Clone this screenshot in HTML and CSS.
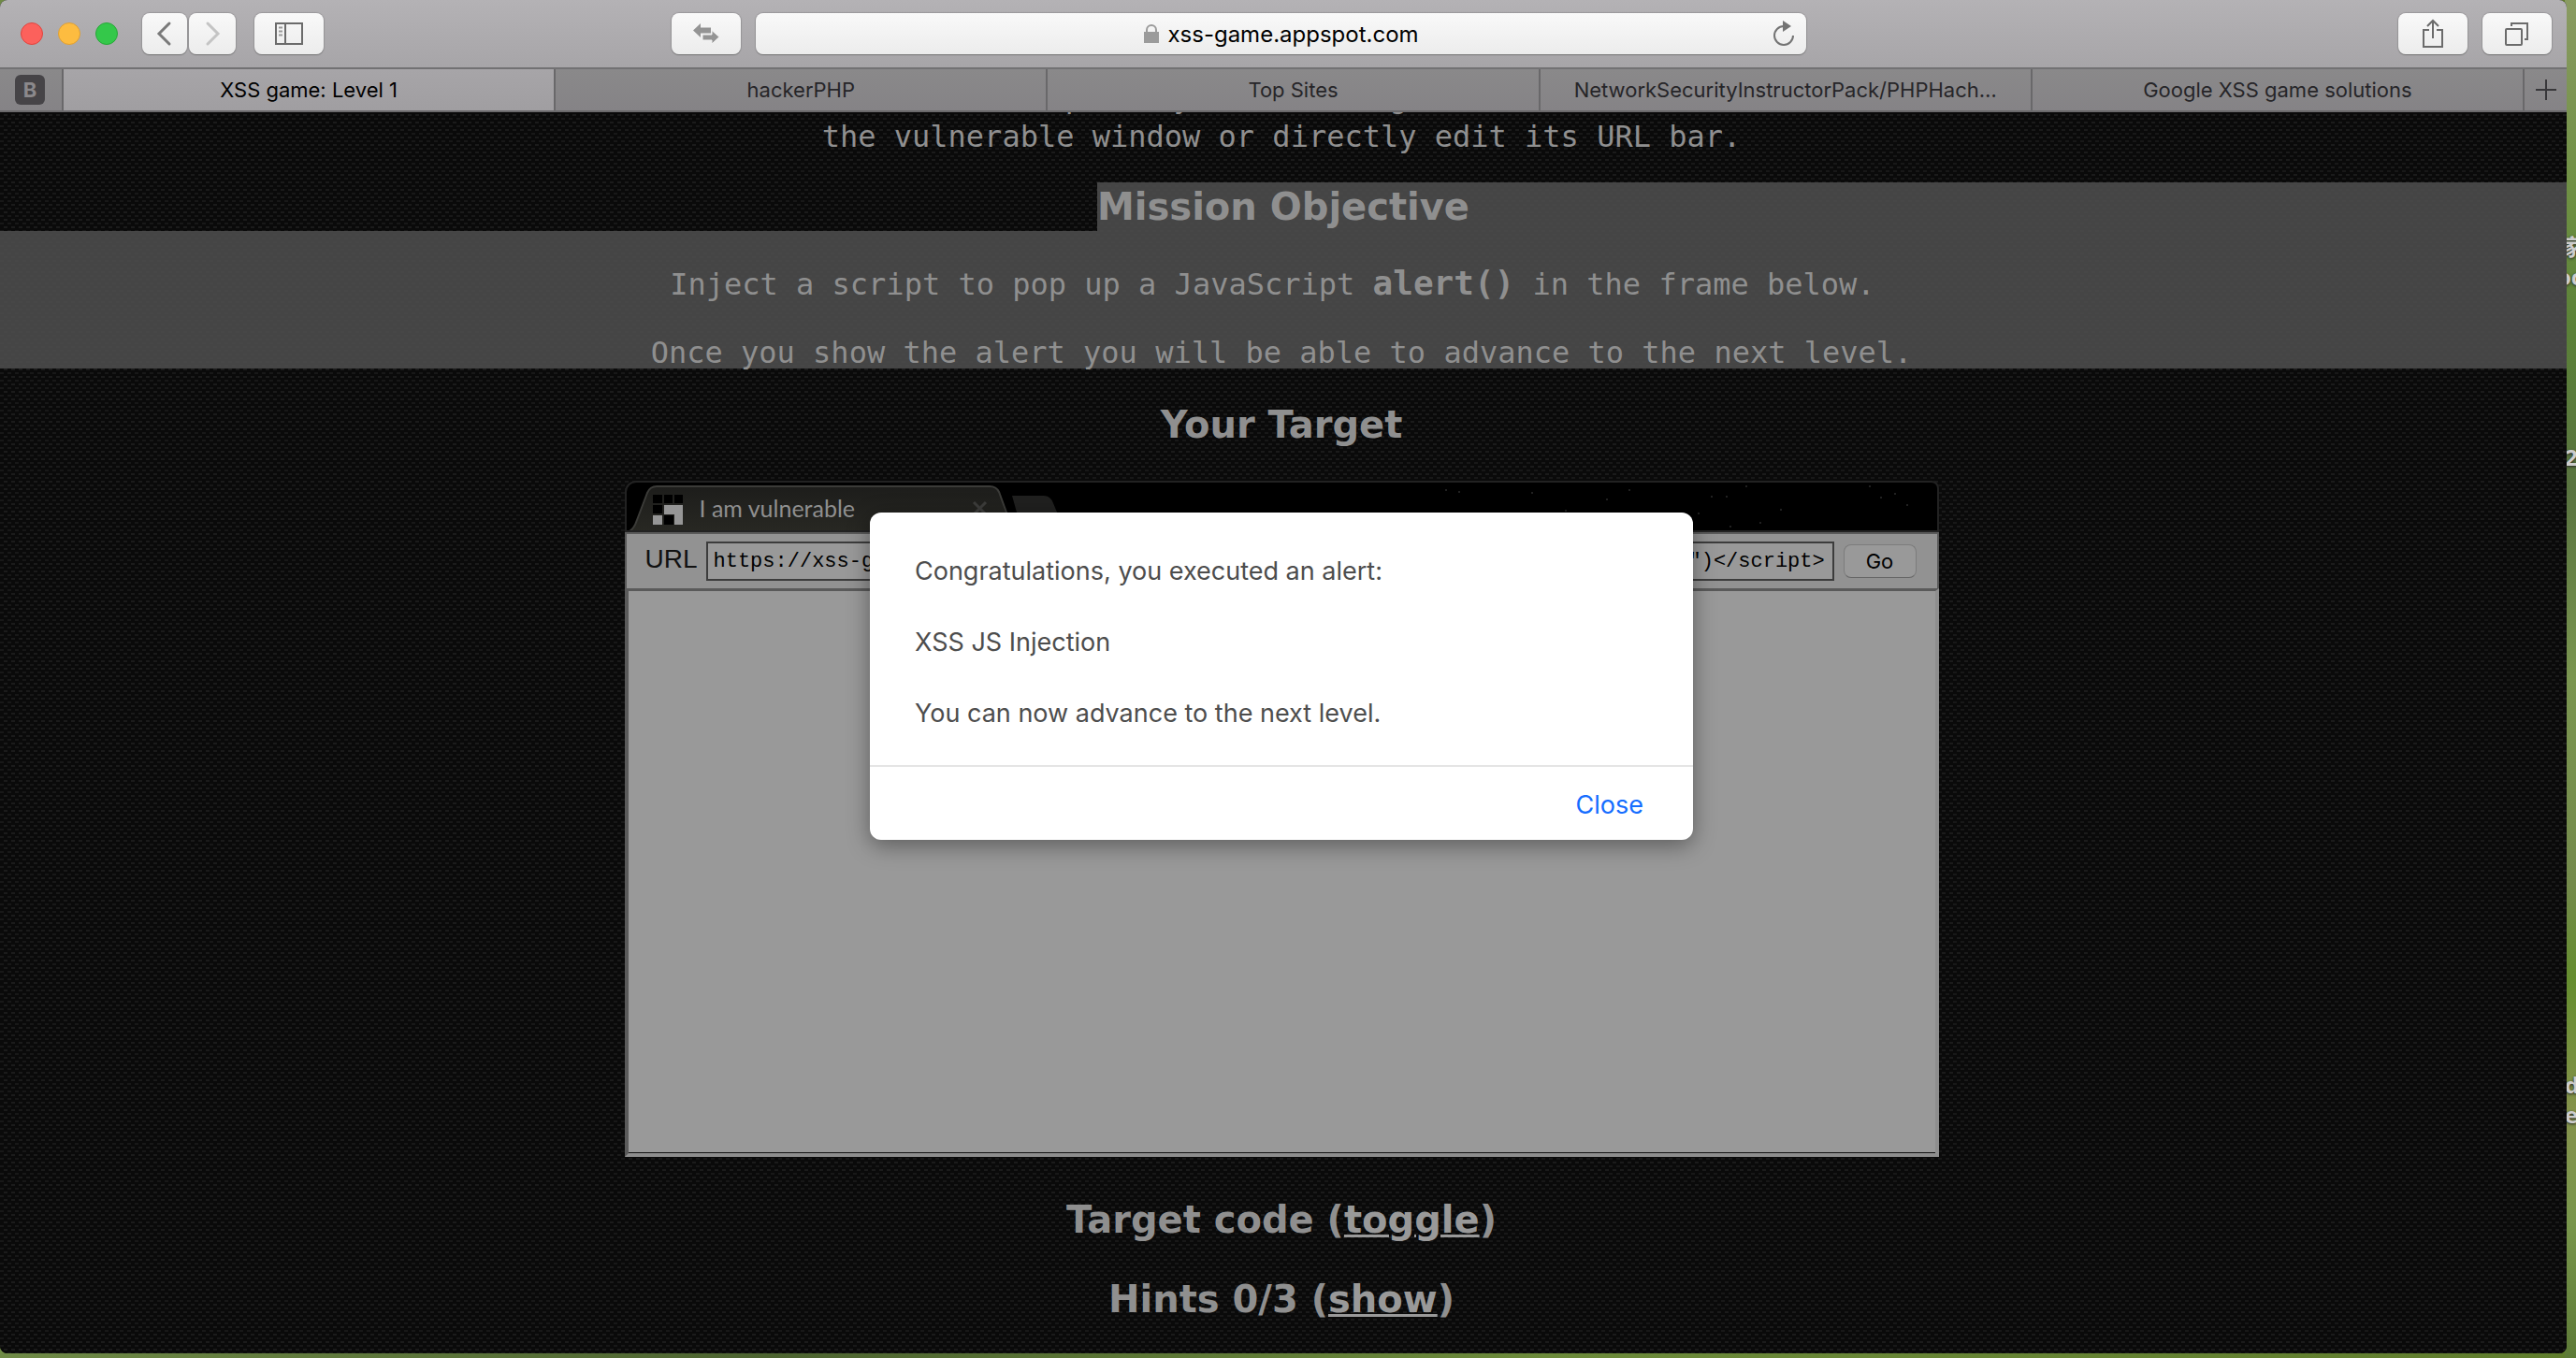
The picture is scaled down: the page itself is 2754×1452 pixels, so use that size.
FILE: index.html
```html
<!DOCTYPE html>
<html lang="en">
<head>
<meta charset="utf-8">
<title>XSS game: Level 1</title>
<link rel="stylesheet" href="styles.css">
</head>
<body>
<div class="desktop" aria-hidden="true">
  <span class="label label-a">家</span>
  <span class="label label-b">oc</span>
  <span class="label label-c">22</span>
  <span class="label label-d">d</span>
  <span class="label label-e">e</span>
</div>
<div class="window">
  <header class="toolbar">
    <div class="lights">
      <button class="light red" aria-label="Close window"></button>
      <button class="light yellow" aria-label="Minimise"></button>
      <button class="light green" aria-label="Zoom"></button>
    </div>
    <div class="nav">
      <button class="tool back" aria-label="Back"><svg width="20" height="30" viewBox="0 0 20 30"><path d="M15 4 4 15l11 11" fill="none" stroke="#7a7a7a" stroke-width="3" stroke-linecap="round"/></svg></button>
      <button class="tool forward" aria-label="Forward"><svg width="20" height="30" viewBox="0 0 20 30"><path d="M5 4l11 11L5 26" fill="none" stroke="#c4c4c4" stroke-width="3" stroke-linecap="round"/></svg></button>
    </div>
    <button class="tool" aria-label="Sidebar"><svg width="30" height="24" viewBox="0 0 30 24" fill="none" stroke="#6b6b6b" stroke-width="2"><rect x="1" y="1" width="28" height="22"/><path d="M11 1v22"/><path d="M4 5.500h4M4 9.500h4M4 13.500h4" stroke="#999"/></svg></button>
    <div class="address-group">
      <button class="tool" aria-label="Switch"><svg width="28" height="24" viewBox="0 0 28 24" fill="#949494"><path d="M0 8.500 8 1v4.500h11v6H8V16z"/><path d="M28 15.500 20 8.500V13H10v6h10v4z" stroke="#f2f2f2" stroke-width="1"/></svg></button>
      <div class="address">
        <svg class="lock" width="18" height="22" viewBox="0 0 18 22"><path d="M4 10V7a5 5 0 0 1 10 0v3" fill="none" stroke="#9b9b9b" stroke-width="2"/><rect x="1" y="9" width="16" height="12" fill="#9b9b9b"/></svg>
        <span>xss-game.appspot.com</span>
        <button class="reload" aria-label="Reload"><svg width="24" height="28" viewBox="0 0 24 28"><path d="M12 6a10 10 0 1 0 10 10" fill="none" stroke="#747474" stroke-width="2"/><path d="M11 0l9 6-9 6z" fill="#747474"/></svg></button>
      </div>
    </div>
    <div class="right-tools">
      <button class="tool" aria-label="Share"><svg width="24" height="32" viewBox="0 0 24 32" fill="none" stroke="#6b6b6b" stroke-width="2"><path d="M8 12H2v18h20V12h-6M12 21V3M6 8l6-6 6 6"/></svg></button>
      <button class="tool" aria-label="All tabs"><svg width="26" height="26" viewBox="0 0 26 26" fill="none" stroke="#6b6b6b" stroke-width="2"><rect x="1" y="8" width="17" height="17" rx="1"/><path d="M7 5V2h17v17h-3"/></svg></button>
    </div>
  </header>
  <nav class="tabs">
    <a class="pin" href="#"><b>B</b></a>
    <a class="tab active" href="#">XSS game: Level 1</a>
    <a class="tab" href="#">hackerPHP</a>
    <a class="tab" href="#">Top Sites</a>
    <a class="tab" href="#">NetworkSecurityInstructorPack/PHPHach…</a>
    <a class="tab" href="#">Google XSS game solutions</a>
    <button class="new-tab" aria-label="New tab"><svg width="22" height="22" viewBox="0 0 22 22"><path d="M11 0v22M0 11h22" stroke="#38373a" stroke-width="2"/></svg></button>
  </nav>
  <main class="page">
    <p class="intro">make it execute JavaScript of your choosing. You can take actions inside<br>the vulnerable window or directly edit its URL bar.</p>
    <h2 class="mission"><span>Mission Objective</span></h2>
    <div class="selected">
      <p>Inject a script to pop up a JavaScript <b>alert()</b> in the frame below.&nbsp;</p>
      <p>Once you show the alert you will be able to advance to the next level.</p>
    </div>
    <h2 class="target-title">Your Target</h2>
    <section class="frame">
      <div class="frame-tabs">
        <svg class="frame-tab" width="480" height="55" viewBox="0 0 480 55">
          <defs><linearGradient id="tabfill" x1="0" y1="0" x2="0" y2="1"><stop offset="0" stop-color="#1d1d1b"/><stop offset="1" stop-color="#282823"/></linearGradient></defs>
          <path d="M0 54Q7 53 11 40L22 11Q25 4 32 4H388Q395 4 398 10L414 54z" fill="url(#tabfill)"/>
          <path d="M0 53Q7 52 11 40L22 11Q25 4 32 4H388Q395 4 398 10L414 54" fill="none" stroke="#3b3b38" stroke-width="2"/>
          <path d="M412 14h34q7 0 10 8l10 24h-38q-6 0-9-7z" fill="#20201f"/>
          <path d="M371 21l13 13M384 21l-13 13" stroke="#3d3d3b" stroke-width="3"/>
          <path d="M28 13h10v9H28zM40 13h9v9h-9zM51 13h9v9h-9zM28 24h10v9H28zM40 35h10v10H40z" fill="#000"/>
          <path d="M40 24h20v21h-9V34H40zM28 35h10v10H28z" fill="#969696"/>
        </svg>
        <span class="frame-name">I am vulnerable</span>
        <svg class="stars" width="800" height="50" viewBox="0 0 800 50" fill="#2c2c2c"><circle cx="275" cy="8" r="1"/><circle cx="289" cy="10" r="1"/><circle cx="367" cy="11" r="1"/><circle cx="403" cy="30" r="1"/><circle cx="447" cy="18" r="1"/><circle cx="471" cy="8" r="1"/><circle cx="559" cy="15" r="1"/><circle cx="575" cy="15" r="1"/><circle cx="545" cy="33" r="1"/><circle cx="633" cy="29" r="1"/><circle cx="611" cy="43" r="1"/><circle cx="579" cy="47" r="1"/><circle cx="596" cy="4" r="1"/><circle cx="728" cy="4" r="1"/><circle cx="740" cy="16" r="1"/><circle cx="755" cy="12" r="1"/><circle cx="768" cy="24" r="1"/></svg>
      </div>
      <form class="url-bar">
        <label for="url">URL</label>
        <input id="url" type="text" value='https://xss-game.appspot.com/level1/frame?query=&lt;script&gt;alert("XSS JS Injection")&lt;/script&gt;'>
        <button type="button">Go</button>
      </form>
      <div class="view"></div>
    </section>
    <h2 class="code-title">Target code (<a href="#">toggle</a>)</h2>
    <h2 class="hints-title">Hints 0/3 (<a href="#">show</a>)</h2>
  </main>
</div>
<div class="dialog" role="alertdialog" aria-label="Alert">
  <div class="message">
    <p>Congratulations, you executed an alert:</p>
    <p>XSS JS Injection</p>
    <p>You can now advance to the next level.</p>
  </div>
  <div class="actions"><button>Close</button></div>
</div>
</body>
</html>
```

FILE: styles.css
```css
* { box-sizing: border-box; }
body {
  margin: 0;
  height: 100vh;
  position: relative;
  overflow: hidden;
  padding: 0 10px 5px 0;
  font-family: Inter, sans-serif;
  background: linear-gradient(90deg, #6f8a46, #4c6330 30%, #6c8a3a 60%, #5f7c2c);
}
h2, p { margin: 0; }
button { font: inherit; border: 0; padding: 0; }
svg { display: block; }
.desktop {
  position: absolute;
  inset: 0 0 0 auto;
  width: 12px;
  overflow: hidden;
  background: linear-gradient(#8a9b62, #6d8f42 15%, #5b8138 24%, #597340 36%, #7a9550 50%, #748a4c 65%, #658d2f 72%, #85924c 82%, #79964c 90%, #5d7a37);
}
.label {
  position: absolute;
  left: 0;
  font: 700 24px/28px "Open Sans", "Noto Sans CJK SC", sans-serif;
  color: #ccc;
  text-shadow: 0 1px 3px #222;
}
.label-a { top: 250px; left: -4px; }
.label-b { top: 282px; left: -8px; }
.label-c { top: 475px; }
.label-d { top: 1146px; }
.label-e { top: 1178px; }
.window {
  position: relative;
  display: flex;
  flex-direction: column;
  height: 100%;
  border-radius: 8px;
  overflow: hidden;
  background: #0a0a0a;
}
.toolbar {
  display: flex;
  align-items: center;
  padding: 0 16px 0 22px;
  height: 74px;
  flex: none;
  border-bottom: 2px solid #727173;
  background: linear-gradient(#b4b2b5, #a7a5a8);
}
.lights { display: flex; gap: 16px; margin-right: 26px; }
.light { width: 24px; height: 24px; border-radius: 50%; border: 1px solid; }
.red { background: #fc615c; border-color: #e0443e; }
.yellow { background: #fdbc40; border-color: #de9f34; }
.green { background: #34c84a; border-color: #27a837; }
.nav { display: flex; gap: 2px; margin-right: 20px; }
.tool {
  display: flex;
  align-items: center;
  justify-content: center;
  width: 74px;
  height: 44px;
  border-radius: 8px;
  background: linear-gradient(#f9f9f9, #ececec);
  box-shadow: 0 1px 1px #777, 0 0 1px 1px #9a989b;
}
.nav .back { width: 48px; }
.nav .forward { width: 50px; }
.address-group { flex: 1; display: flex; gap: 16px; margin: 0 633px 0 372px; }
.address {
  flex: 1;
  position: relative;
  display: flex;
  align-items: center;
  justify-content: center;
  gap: 8px;
  height: 44px;
  border-radius: 8px;
  font-size: 24px;
  color: #000;
  background: linear-gradient(#f9f9f9, #ececec);
  box-shadow: 0 1px 1px #777, 0 0 1px 1px #9a989b;
}
.reload { position: absolute; right: 12px; top: 8px; background: none; }
.right-tools { display: flex; gap: 16px; }
.tabs {
  display: flex;
  flex: none;
  height: 46px;
  border-bottom: 2px solid #6b6a6c;
  background: linear-gradient(#8a898a, #858386);
}
.pin {
  width: 66px;
  display: flex;
  align-items: center;
  justify-content: center;
  padding-right: 2px;
  text-decoration: none;
}
.pin b {
  width: 32px;
  height: 32px;
  border-radius: 6px;
  background: #464447;
  color: #8b898c;
  font-size: 22px;
  line-height: 32px;
  text-align: center;
}
.tab {
  flex: 1;
  text-align: center;
  font-size: 22px;
  line-height: 44px;
  color: #262528;
  text-decoration: none;
  white-space: nowrap;
  border-left: 2px solid #69686a;
}
.active { color: #000; background: linear-gradient(#a7a5a8, #a09ea1); }
.new-tab {
  width: 47px;
  display: flex;
  align-items: center;
  justify-content: center;
  border-left: 2px solid #69686a;
  background: none;
}
.page {
  flex: 1;
  overflow: hidden;
  text-align: center;
  color: #8f8f8f;
  font: 32px/42px "DejaVu Sans Mono", monospace;
  background-color: #0a0a0a;
  background-image:
    conic-gradient(from 0deg at 4px 2px, transparent 75%, #1b1b1b 0),
    conic-gradient(from 0deg at 4px 2px, transparent 75%, #181818 0);
  background-size: 8px 8px;
  background-position: 4px 2px, 0 6px;
}
.intro { margin-top: -37px; padding-right: 4px; }
.page h2 { font: 700 40px/52px "DejaVu Sans", sans-serif; padding-right: 4px; }
.page .mission {
  display: grid;
  grid-template-columns: 1fr auto 1fr;
  margin-top: 28px;
  padding: 0;
}
.mission::before, .mission::after { content: ""; }
.mission span, .mission::after, .selected { background: rgba(79, 79, 79, .86); }
.selected { padding: 35px 4px 0 0; height: 147px; }
.selected p { height: 74px; }
.selected b { font-size: 36px; line-height: 42px; }
.page .target-title { margin-top: 34px; }
.frame { width: 1405px; max-width: 100%; margin: 34px auto 0; position: relative; right: 2px; }
.frame-tabs {
  position: relative;
  height: 55px;
  border: 2px solid #222;
  border-radius: 12px 8px 0 0;
  background: #000;
  overflow: hidden;
}
.frame-tab, .stars { position: absolute; top: 0; left: 0; }
.stars { left: auto; right: 0; }
.frame-name { position: absolute; left: 78px; top: 9px; font: 25px/36px Lato, sans-serif; }
.url-bar {
  display: flex;
  align-items: center;
  height: 60px;
  padding: 0 22px 0 20px;
  border: 2px solid #5a5a5a;
  border-bottom: 0;
  background: #929292;
}
.url-bar label { font: 28px/32px "Liberation Sans", sans-serif; color: #111; margin-right: 9px; padding-bottom: 4px; }
.url-bar input {
  flex: 1;
  min-width: 0;
  height: 42px;
  border: 2px solid #3c3c3c;
  border-radius: 0;
  padding: 0 6px;
  background: #999;
  color: #000;
  font: 22px/30px "Liberation Mono", monospace;
}
.url-bar button {
  width: 78px;
  height: 36px;
  margin-left: 10px;
  border-radius: 8px;
  border: 1px solid #7c7c7c;
  border-bottom-color: #666;
  background: #999;
  color: #000;
  font: 22px/30px Inter, sans-serif;
}
.view {
  height: 608px;
  background: linear-gradient(#111, #111) 0 600px / 100% 1px no-repeat #999;
  border: 4px solid #8e8e8e;
  border-top: 3px solid #5a5a5a;
  border-left-color: #5a5a5a;
}
.page .code-title { margin-top: 41px; }
.page .hints-title { margin-top: 33px; }
.page h2 a { color: #999; text-decoration-thickness: 3px; }
.dialog {
  position: absolute;
  left: 50%;
  top: 548px;
  width: 880px;
  margin-left: -447px;
  border-radius: 12px;
  background: #fff;
  box-shadow: 0 6px 24px rgba(0, 0, 0, .4);
}
.message {
  padding: 43px 48px 35px;
  color: #4d4d4d;
  font-size: 27px;
  line-height: 40px;
  border-bottom: 2px solid #e5e5e5;
}
.message p { margin-bottom: 36px; }
.message p:last-child { margin-bottom: 0; }
.actions { display: flex; justify-content: flex-end; padding: 21px 53px 17px; }
.actions button { background: none; color: #156dff; font-size: 27px; line-height: 40px; }
```
